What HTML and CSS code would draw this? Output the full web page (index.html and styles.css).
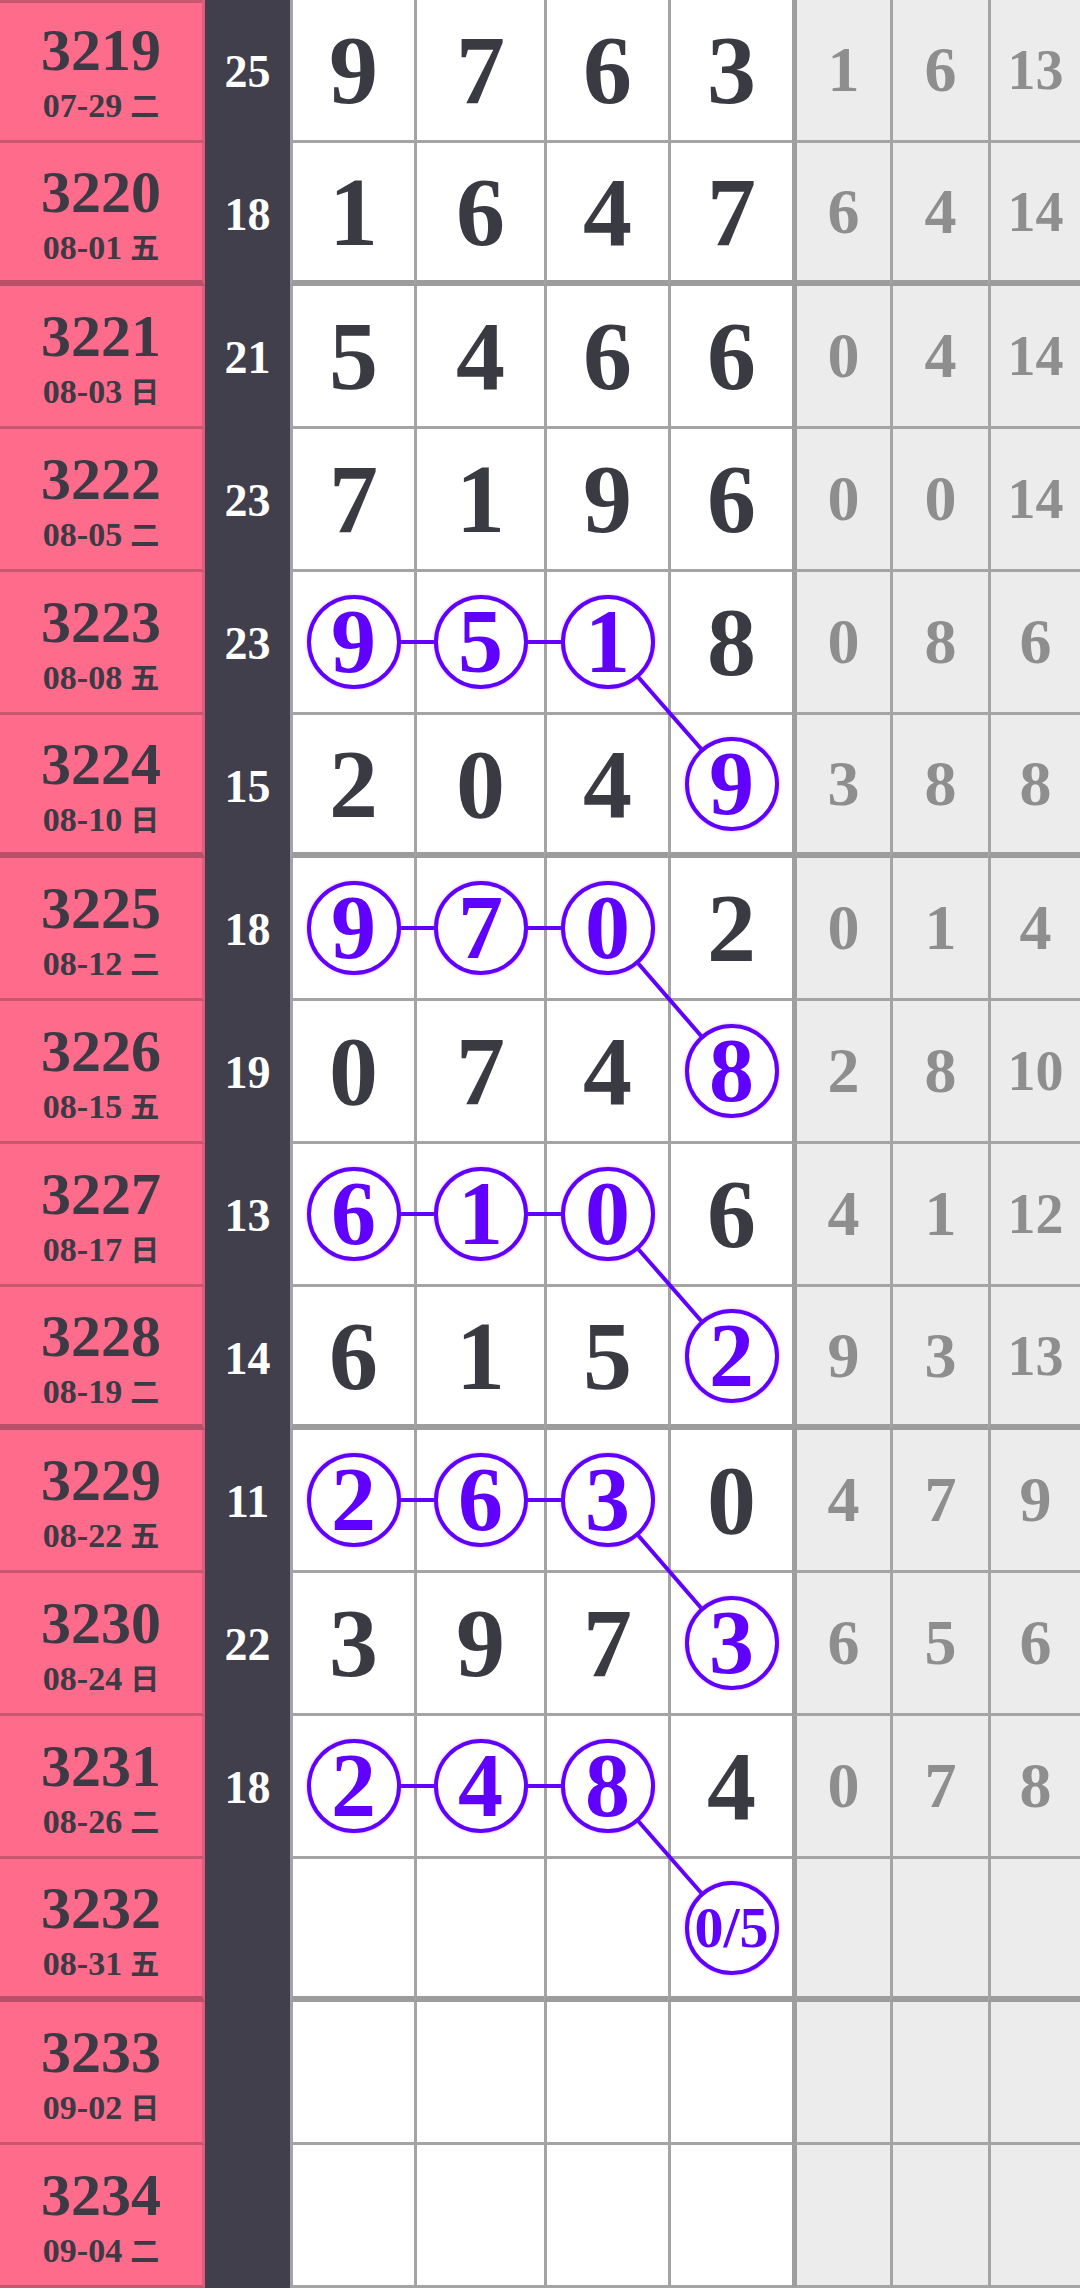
FILE: index.html
```html
<!DOCTYPE html>
<html lang="zh">
<head>
<meta charset="utf-8">
<title>走势图</title>
<link rel="stylesheet" href="styles.css">
</head>
<body>
<div class="chart">
  <div class="row">
    <div class="cell issue"><span class="no">3219</span><span class="date">07-29 <i>二</i></span></div>
    <div class="cell sum">25</div>
    <div class="cell d">9</div><div class="cell d">7</div><div class="cell d">6</div><div class="cell d">3</div>
    <div class="cell g first">1</div><div class="cell g">6</div><div class="cell g"><span class="two">13</span></div>
  </div>
  <div class="row end">
    <div class="cell issue"><span class="no">3220</span><span class="date">08-01 <i>五</i></span></div>
    <div class="cell sum">18</div>
    <div class="cell d">1</div><div class="cell d">6</div><div class="cell d">4</div><div class="cell d">7</div>
    <div class="cell g first">6</div><div class="cell g">4</div><div class="cell g"><span class="two">14</span></div>
  </div>
  <div class="row">
    <div class="cell issue"><span class="no">3221</span><span class="date">08-03 <i>日</i></span></div>
    <div class="cell sum">21</div>
    <div class="cell d">5</div><div class="cell d">4</div><div class="cell d">6</div><div class="cell d">6</div>
    <div class="cell g first">0</div><div class="cell g">4</div><div class="cell g"><span class="two">14</span></div>
  </div>
  <div class="row">
    <div class="cell issue"><span class="no">3222</span><span class="date">08-05 <i>二</i></span></div>
    <div class="cell sum">23</div>
    <div class="cell d">7</div><div class="cell d">1</div><div class="cell d">9</div><div class="cell d">6</div>
    <div class="cell g first">0</div><div class="cell g">0</div><div class="cell g"><span class="two">14</span></div>
  </div>
  <div class="row">
    <div class="cell issue"><span class="no">3223</span><span class="date">08-08 <i>五</i></span></div>
    <div class="cell sum">23</div>
    <div class="cell d"><span class="ring">9</span></div><div class="cell d"><span class="ring">5</span></div><div class="cell d"><span class="ring">1</span></div><div class="cell d">8</div>
    <div class="cell g first">0</div><div class="cell g">8</div><div class="cell g">6</div>
  </div>
  <div class="row end">
    <div class="cell issue"><span class="no">3224</span><span class="date">08-10 <i>日</i></span></div>
    <div class="cell sum">15</div>
    <div class="cell d">2</div><div class="cell d">0</div><div class="cell d">4</div><div class="cell d"><span class="ring">9</span></div>
    <div class="cell g first">3</div><div class="cell g">8</div><div class="cell g">8</div>
  </div>
  <div class="row">
    <div class="cell issue"><span class="no">3225</span><span class="date">08-12 <i>二</i></span></div>
    <div class="cell sum">18</div>
    <div class="cell d"><span class="ring">9</span></div><div class="cell d"><span class="ring">7</span></div><div class="cell d"><span class="ring">0</span></div><div class="cell d">2</div>
    <div class="cell g first">0</div><div class="cell g">1</div><div class="cell g">4</div>
  </div>
  <div class="row">
    <div class="cell issue"><span class="no">3226</span><span class="date">08-15 <i>五</i></span></div>
    <div class="cell sum">19</div>
    <div class="cell d">0</div><div class="cell d">7</div><div class="cell d">4</div><div class="cell d"><span class="ring">8</span></div>
    <div class="cell g first">2</div><div class="cell g">8</div><div class="cell g"><span class="two">10</span></div>
  </div>
  <div class="row">
    <div class="cell issue"><span class="no">3227</span><span class="date">08-17 <i>日</i></span></div>
    <div class="cell sum">13</div>
    <div class="cell d"><span class="ring">6</span></div><div class="cell d"><span class="ring">1</span></div><div class="cell d"><span class="ring">0</span></div><div class="cell d">6</div>
    <div class="cell g first">4</div><div class="cell g">1</div><div class="cell g"><span class="two">12</span></div>
  </div>
  <div class="row end">
    <div class="cell issue"><span class="no">3228</span><span class="date">08-19 <i>二</i></span></div>
    <div class="cell sum">14</div>
    <div class="cell d">6</div><div class="cell d">1</div><div class="cell d">5</div><div class="cell d"><span class="ring">2</span></div>
    <div class="cell g first">9</div><div class="cell g">3</div><div class="cell g"><span class="two">13</span></div>
  </div>
  <div class="row">
    <div class="cell issue"><span class="no">3229</span><span class="date">08-22 <i>五</i></span></div>
    <div class="cell sum">11</div>
    <div class="cell d"><span class="ring">2</span></div><div class="cell d"><span class="ring">6</span></div><div class="cell d"><span class="ring">3</span></div><div class="cell d">0</div>
    <div class="cell g first">4</div><div class="cell g">7</div><div class="cell g">9</div>
  </div>
  <div class="row">
    <div class="cell issue"><span class="no">3230</span><span class="date">08-24 <i>日</i></span></div>
    <div class="cell sum">22</div>
    <div class="cell d">3</div><div class="cell d">9</div><div class="cell d">7</div><div class="cell d"><span class="ring">3</span></div>
    <div class="cell g first">6</div><div class="cell g">5</div><div class="cell g">6</div>
  </div>
  <div class="row">
    <div class="cell issue"><span class="no">3231</span><span class="date">08-26 <i>二</i></span></div>
    <div class="cell sum">18</div>
    <div class="cell d"><span class="ring">2</span></div><div class="cell d"><span class="ring">4</span></div><div class="cell d"><span class="ring">8</span></div><div class="cell d">4</div>
    <div class="cell g first">0</div><div class="cell g">7</div><div class="cell g">8</div>
  </div>
  <div class="row end">
    <div class="cell issue"><span class="no">3232</span><span class="date">08-31 <i>五</i></span></div>
    <div class="cell sum"></div>
    <div class="cell d"></div><div class="cell d"></div><div class="cell d"></div><div class="cell d"><span class="ring small">0/5</span></div>
    <div class="cell g first"></div><div class="cell g"></div><div class="cell g"></div>
  </div>
  <div class="row">
    <div class="cell issue"><span class="no">3233</span><span class="date">09-02 <i>日</i></span></div>
    <div class="cell sum"></div>
    <div class="cell d"></div><div class="cell d"></div><div class="cell d"></div><div class="cell d"></div>
    <div class="cell g first"></div><div class="cell g"></div><div class="cell g"></div>
  </div>
  <div class="row">
    <div class="cell issue"><span class="no">3234</span><span class="date">09-04 <i>二</i></span></div>
    <div class="cell sum"></div>
    <div class="cell d"></div><div class="cell d"></div><div class="cell d"></div><div class="cell d"></div>
    <div class="cell g first"></div><div class="cell g"></div><div class="cell g"></div>
  </div>

  <svg class="links" width="1080" height="2289" viewBox="0 0 1080 2289" aria-hidden="true">
    <g stroke="#6000ff" stroke-width="4" fill="none">
      <line x1="353.5" y1="642" x2="607.5" y2="642"/>
      <line x1="607.5" y1="642" x2="731.5" y2="783.5"/>
      <line x1="353.5" y1="928" x2="607.5" y2="928"/>
      <line x1="607.5" y1="928" x2="731.5" y2="1071"/>
      <line x1="353.5" y1="1214" x2="607.5" y2="1214"/>
      <line x1="607.5" y1="1214" x2="731.5" y2="1355.5"/>
      <line x1="353.5" y1="1500" x2="607.5" y2="1500"/>
      <line x1="607.5" y1="1500" x2="731.5" y2="1643"/>
      <line x1="353.5" y1="1786" x2="607.5" y2="1786"/>
      <line x1="607.5" y1="1786" x2="731.5" y2="1927.5"/>
    </g>
  </svg>
</div>
</body>
</html>
```

FILE: styles.css
```css
html, body {
  margin: 0;
  padding: 0;
  background: #ffffff;
}

.chart {
  position: relative;
  width: 1080px;
  font-family: "Liberation Serif", "Noto Sans CJK SC", serif;
  font-weight: 700;
}

.row {
  display: grid;
  grid-template-columns: 205px 85px 124px 130px 124px 124px 98px 98px 92px;
  height: 143px;
}

.cell {
  box-sizing: border-box;
  display: flex;
  align-items: center;
  justify-content: center;
  border-bottom: 3px solid #a4a4a4;
  line-height: 1;
}

.row.end .cell {
  border-bottom-width: 6px;
  border-bottom-color: #9c9c9c;
}

/* issue column */
.issue {
  flex-direction: column;
  background: #ff6b8b;
  border-right: 3px solid #de5d7c;
  border-bottom-color: #c9566f;
  color: #3c3a44;
}

.row.end .issue {
  border-bottom-color: #b94f68;
}

.row:first-child .issue {
  box-shadow: inset 0 3px 0 #c9566f;
}

.issue .no {
  display: block;
  font-size: 60px;
  line-height: 70px;
}

.issue .date {
  display: flex;
  align-items: baseline;
  gap: 8px;
  font-size: 34px;
  line-height: 38px;
  height: 38px;
  margin-top: 2px;
}

.issue .date i {
  font-style: normal;
  font-family: "Noto Sans CJK SC", sans-serif;
  font-weight: 700;
  font-size: 29px;
  line-height: 29px;
}

/* sum column */
.sum {
  background: #403f4b;
  color: #ffffff;
  font-size: 46px;
  border-bottom: none;
}

.row.end .sum {
  border-bottom: none;
}

/* digit columns */
.d {
  background: #ffffff;
  border-left: 3px solid #a4a4a4;
  color: #3a3a42;
  font-size: 98px;
}

.ring {
  position: relative;
  z-index: 2;
  box-sizing: border-box;
  width: 94px;
  height: 94px;
  border: 4px solid #6000ff;
  border-radius: 50%;
  background: #ffffff;
  color: #6000ff;
  display: flex;
  align-items: center;
  justify-content: center;
  font-size: 90px;
  box-shadow: 0 0 3px rgba(190, 60, 255, 0.45);
}

.ring.small {
  font-size: 58px;
}

/* gray columns */
.g {
  background: #ececec;
  border-left: 3px solid #a4a4a4;
  color: #8e8e8e;
  font-size: 64px;
}

.g.first {
  border-left: 5px solid #9e9e9e;
}

.g .two {
  font-size: 56px;
}

.links {
  position: absolute;
  left: 0;
  top: 0;
  z-index: 1;
  pointer-events: none;
}
```
